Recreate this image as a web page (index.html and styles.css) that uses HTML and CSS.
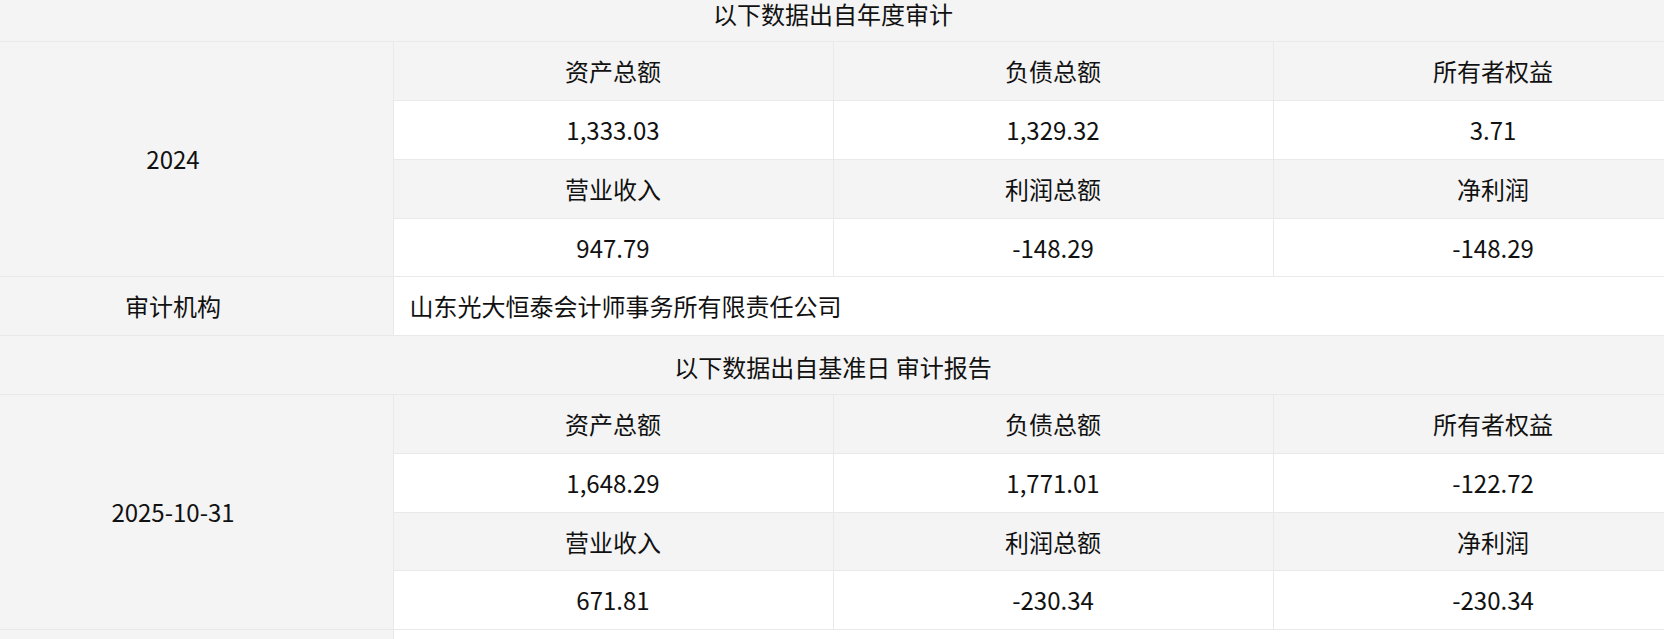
FILE: index.html
```html
<!DOCTYPE html>
<html lang="zh-CN">
<head>
<meta charset="utf-8">
<title>审计数据</title>
<link rel="stylesheet" href="styles.css">
</head>
<body>
<div class="viewport">
  <table class="audit">
    <colgroup>
      <col class="c">
      <col class="c">
      <col class="c">
      <col class="c">
    </colgroup>
    <tbody>
      <tr><td class="title" colspan="4">以下数据出自年度审计</td></tr>
      <tr>
        <td class="key" rowspan="4">2024</td>
        <td class="head">资产总额</td><td class="head">负债总额</td><td class="head">所有者权益</td>
      </tr>
      <tr><td class="val">1,333.03</td><td class="val">1,329.32</td><td class="val">3.71</td></tr>
      <tr><td class="head">营业收入</td><td class="head">利润总额</td><td class="head">净利润</td></tr>
      <tr><td class="val">947.79</td><td class="val">-148.29</td><td class="val">-148.29</td></tr>
      <tr><td class="key">审计机构</td><td class="org" colspan="3">山东光大恒泰会计师事务所有限责任公司</td></tr>
      <tr><td class="title" colspan="4">以下数据出自基准日 审计报告</td></tr>
      <tr>
        <td class="key" rowspan="4">2025-10-31</td>
        <td class="head">资产总额</td><td class="head">负债总额</td><td class="head">所有者权益</td>
      </tr>
      <tr><td class="val">1,648.29</td><td class="val">1,771.01</td><td class="val">-122.72</td></tr>
      <tr><td class="head">营业收入</td><td class="head">利润总额</td><td class="head">净利润</td></tr>
      <tr><td class="val">671.81</td><td class="val">-230.34</td><td class="val">-230.34</td></tr>
      <tr><td class="key"></td><td class="org" colspan="3"></td></tr>
    </tbody>
  </table>
</div>
</body>
</html>
```
FILE: styles.css
```css
html, body {
  margin: 0;
  padding: 0;
  background: #fff;
  overflow: hidden;
}

.viewport {
  width: 1664px;
  height: 639px;
  overflow: hidden;
}

.audit {
  margin: -17.5px 0 0 -47.5px;
  width: 1760px;
  table-layout: fixed;
  border-collapse: collapse;
  font-family: "Noto Sans CJK SC", "Microsoft YaHei", sans-serif;
  font-size: 24px;
  color: #111;
}

.audit .c {
  width: 440px;
}

.audit td {
  height: 58.8px;
  box-sizing: border-box;
  padding: 0 16px;
  border: 1px solid #e9e9e9;
  text-align: center;
  vertical-align: middle;
  line-height: 1;
  white-space: nowrap;
}

.audit .title {
  padding-top: 3px;
}

.audit .title,
.audit .key,
.audit .head {
  background: #f4f4f4;
}

.audit .val,
.audit .org {
  background: #fff;
}

.audit .org {
  text-align: left;
}
```
